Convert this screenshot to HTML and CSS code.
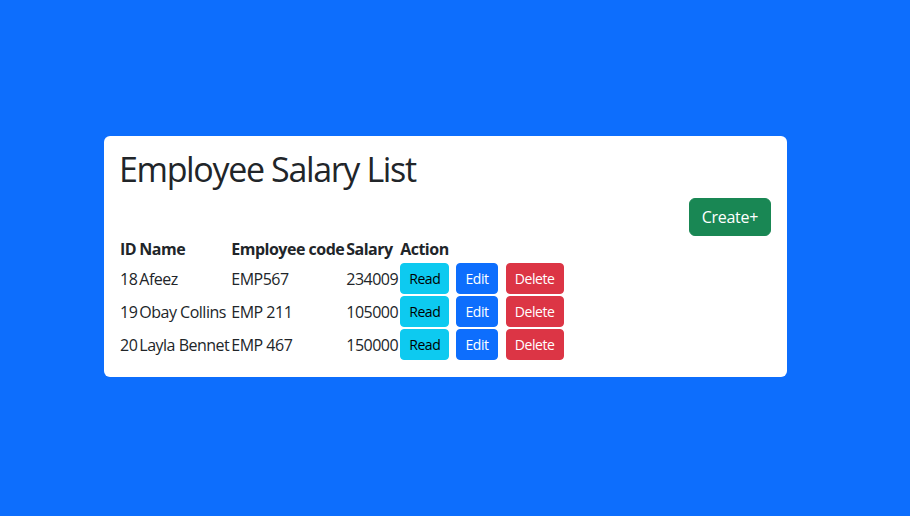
FILE: index.html
```html
<!DOCTYPE html>
<html lang="en">
<head>
<meta charset="utf-8">
<title>Employee Salary List</title>
<link rel="stylesheet" href="styles.css">
</head>
<body>
<main class="page">
  <section class="card">
    <h1 class="title">Employee Salary List</h1>
    <div class="toolbar">
      <button class="btn btn-success">Create+</button>
    </div>
    <table class="list">
      <thead>
        <tr><th>ID</th><th>Name</th><th>Employee code</th><th>Salary</th><th>Action</th></tr>
      </thead>
      <tbody>
        <tr>
          <td>18</td><td>Afeez</td><td>EMP567</td><td>234009</td>
          <td><div class="actions"><button class="btn-sm btn-info">Read</button><button class="btn-sm btn-primary">Edit</button><button class="btn-sm btn-danger">Delete</button></div></td>
        </tr>
        <tr>
          <td>19</td><td>Obay Collins</td><td>EMP 211</td><td>105000</td>
          <td><div class="actions"><button class="btn-sm btn-info">Read</button><button class="btn-sm btn-primary">Edit</button><button class="btn-sm btn-danger">Delete</button></div></td>
        </tr>
        <tr>
          <td>20</td><td>Layla Bennet</td><td>EMP 467</td><td>150000</td>
          <td><div class="actions"><button class="btn-sm btn-info">Read</button><button class="btn-sm btn-primary">Edit</button><button class="btn-sm btn-danger">Delete</button></div></td>
        </tr>
      </tbody>
    </table>
  </section>
</main>
</body>
</html>
```
FILE: styles.css
```css
* { box-sizing: border-box; }
html, body { margin: 0; padding: 0; }
body {
  background: #0d6efd;
  font-family: "Open Sans", "Noto Sans", sans-serif;
  font-size: 16px;
  line-height: 1.5;
  color: #212529;
}
.page {
  min-height: 516px;
  display: flex;
  align-items: flex-start;
  padding: 136px 0 0 104px;
}
.card {
  width: 683px;
  background: #fff;
  border-radius: 6px;
  padding: 12px 12px 15px 12px;
}
.title {
  margin: 0 0 8px 0;
  font-size: 34px;
  font-weight: 500;
  letter-spacing: -1.35px;
  line-height: 42px;
  padding-left: 3px;
}
.toolbar {
  display: flex;
  justify-content: flex-end;
  padding-right: 4px;
}
.btn {
  font-family: inherit;
  font-size: 16px;
  line-height: 1.5;
  letter-spacing: -0.3px;
  padding: 6px 12px;
  border: 1px solid transparent;
  border-radius: 6px;
  color: #fff;
  height: 38px;
}
.btn-success { background: #198754; border-color: #198754; }
.list {
  border-collapse: separate;
  border-spacing: 2px;
  margin-left: 2px;
  letter-spacing: -0.5px;
}
.list th, .list td {
  padding: 0;
  text-align: left;
  vertical-align: middle;
}
.list th { font-weight: 700; line-height: 23px; }
.actions { display: flex; gap: 7px; }
.btn-sm {
  font-family: inherit;
  font-size: 14px;
  line-height: 1.5;
  letter-spacing: -0.4px;
  height: 31px;
  padding: 4px 8px;
  border: 1px solid transparent;
  border-radius: 4px;
}
.btn-info { background: #0dcaf0; border-color: #0dcaf0; color: #000; }
.btn-primary { background: #0d6efd; border-color: #0d6efd; color: #fff; }
.btn-danger { background: #dc3545; border-color: #dc3545; color: #fff; margin-left: 1px; }
```
